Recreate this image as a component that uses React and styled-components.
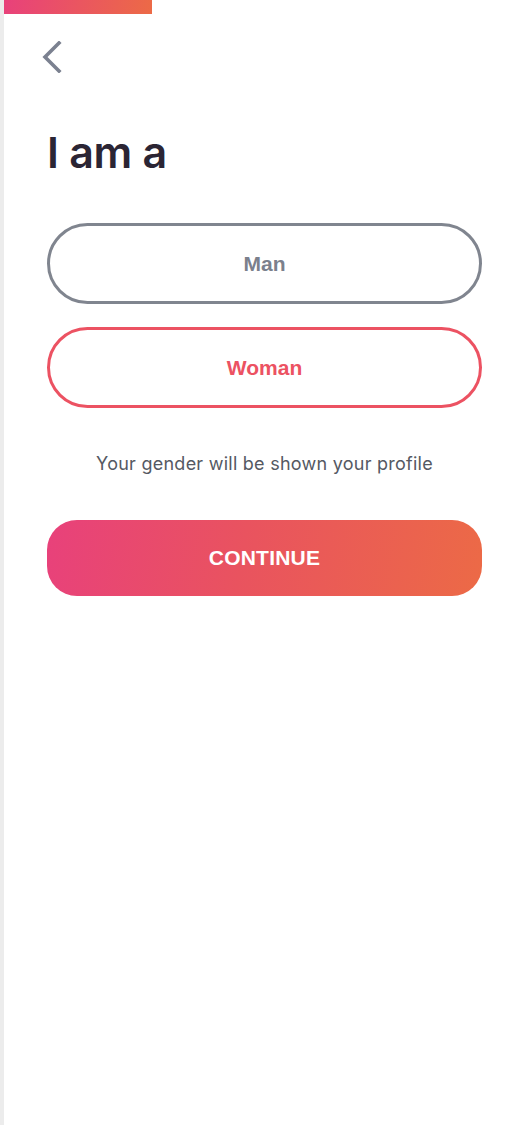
import React, { useState } from "react";
import styled, { createGlobalStyle } from "styled-components";

const Global = createGlobalStyle`
  html, body { margin: 0; padding: 0; background: #fff; }
  * { box-sizing: border-box; }
`;

const Screen = styled.div`
  min-height: 1125px;
  border-left: 4px solid #ececec;
  background: #fff;
  display: flex;
  flex-direction: column;
`;

const Progress = styled.div`
  width: 148px;
  height: 14px;
  background: linear-gradient(100deg, #e8417b 0%, #ec6a46 100%);
`;

const Content = styled.div`
  padding: 27px 39px 0 43px;
  display: flex;
  flex-direction: column;
`;

const BackButton = styled.button`
  width: 30px;
  height: 32px;
  padding: 0;
  border: none;
  background: transparent;
  cursor: pointer;
  display: flex;
  align-items: center;
  justify-content: flex-start;
  margin-left: -7px;
`;

const Title = styled.h1`
  margin: 50px 0 0 0;
  font-family: Inter, "Noto Sans", sans-serif;
  font-weight: 600;
  font-size: 43px;
  line-height: 58px;
  letter-spacing: -0.3px;
  color: #2b2534;
`;

const Options = styled.div`
  margin-top: 42px;
  display: flex;
  flex-direction: column;
  gap: 23px;
`;

const Option = styled.button`
  height: 81px;
  border-radius: 41px;
  background: #fff;
  border: 3px solid ${(p) => (p.$active ? "#ec5262" : "#80858f")};
  color: ${(p) => (p.$active ? "#ec5262" : "#7b808c")};
  font-family: "Liberation Sans", Arial, sans-serif;
  font-weight: 700;
  font-size: 21px;
  cursor: pointer;
  display: flex;
  align-items: center;
  justify-content: center;
`;

const Caption = styled.p`
  margin: 44px 0 0 0;
  text-align: center;
  font-family: Inter, "Noto Sans", sans-serif;
  font-size: 18px;
  line-height: 24px;
  letter-spacing: 0.25px;
  color: #555963;
`;

const Continue = styled.button`
  margin-top: 44px;
  height: 76px;
  border: none;
  border-radius: 30px;
  background: linear-gradient(100deg, #e8417b 0%, #e9535f 45%, #ec6a46 100%);
  color: #fff;
  font-family: "Liberation Sans", Arial, sans-serif;
  font-weight: 700;
  font-size: 21px;
  letter-spacing: 0.2px;
  cursor: pointer;
`;

export default function App() {
  const [gender, setGender] = useState("Woman");
  return (
    <>
      <Global />
      <Screen>
        <Progress />
        <Content>
          <BackButton aria-label="Back">
            <svg width="24" height="32" viewBox="0 0 24 32" fill="none">
              <path
                d="M19 2 L5 16 L19 30"
                stroke="#7b8190"
                strokeWidth="3.6"
                strokeLinecap="square"
              />
            </svg>
          </BackButton>
          <Title>I am a</Title>
          <Options>
            {["Man", "Woman"].map((g) => (
              <Option key={g} $active={gender === g} onClick={() => setGender(g)}>
                {g}
              </Option>
            ))}
          </Options>
          <Caption>Your gender will be shown your profile</Caption>
          <Continue>CONTINUE</Continue>
        </Content>
      </Screen>
    </>
  );
}
